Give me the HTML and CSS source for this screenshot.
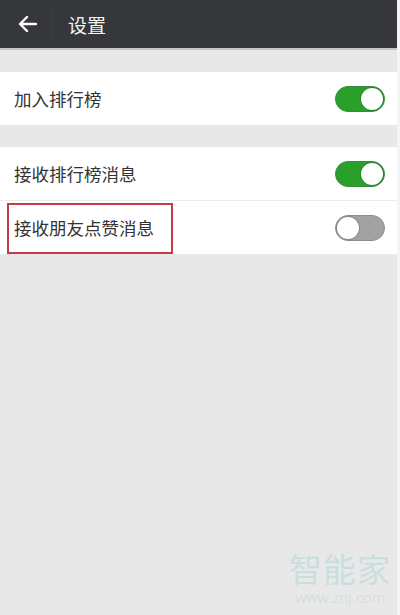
FILE: index.html
```html
<!DOCTYPE html>
<html lang="zh">
<head>
    <meta charset="UTF-8">
    <meta name="viewport" content="width=device-width, initial-scale=1.0">
    <title>设置</title>
    <link rel="stylesheet" href="styles.css">
</head>
<body>
    <div class="screen">
        <div class="top-bar">
            <span class="back-btn">
                <svg width="20" height="18" viewBox="0 0 20 18"><path d="M19 9H3M10 2L3 9l7 7" fill="none" stroke="#fff" stroke-width="2.4" stroke-linecap="round" stroke-linejoin="round"/></svg>
            </span>
            <span class="bar-sep"></span>
            <span class="bar-title">设置</span>
        </div>

        <div class="group">
            <div class="row">
                <span class="row-label">加入排行榜</span>
                <span class="switch on"><span class="knob"></span></span>
            </div>
        </div>

        <div class="group">
            <div class="row">
                <span class="row-label">接收排行榜消息</span>
                <span class="switch on"><span class="knob"></span></span>
            </div>
            <div class="row">
                <span class="row-label">接收朋友点赞消息</span>
                <span class="switch"><span class="knob"></span></span>
                <span class="mark"></span>
            </div>
        </div>

        <div class="watermark">
            <div class="wm-big">智能家</div>
            <div class="wm-small">www.znj.com</div>
        </div>
    </div>
</body>
</html>
```

FILE: styles.css
```css
body { margin: 0; font-family: "Noto Sans CJK SC", "Noto Sans", sans-serif; background-color: #e8e8e8; }
.screen { width: 397px; height: 615px; background-color: #e8e8e8; border-right: 3px solid #f4f4f4; position: relative; overflow: hidden; }
.top-bar { height: 48px; background-color: #36373b; border-bottom: 2px solid #c4c4c6; display: flex; align-items: center; }
.back-btn { width: 52px; display: flex; justify-content: center; padding-left: 2px; box-sizing: border-box; }
.back-btn svg { display: block; }
.bar-sep { width: 1px; height: 30px; background-color: #3e3f43; }
.bar-title { color: #f4f4f4; font-size: 19px; margin-left: 15px; }
.group { margin-top: 22px; background-color: #fff; }
.row { height: 53px; display: flex; align-items: center; justify-content: space-between; padding: 0 12px 0 14px; position: relative; }
.row + .row { border-top: 1px solid #ececec; }
.row-label { font-size: 17.5px; color: #333; }
.switch { width: 50px; height: 26px; border-radius: 13px; background-color: #a2a2a2; border: 1px solid #8e8e8e; box-sizing: border-box; display: flex; align-items: center; justify-content: flex-start; padding: 1px; }
.switch.on { background-color: #29a02b; border-color: #3a8a3a; justify-content: flex-end; }
.knob { width: 22px; height: 22px; border-radius: 50%; background-color: #fff; box-shadow: 0 0 0 1px rgba(0,0,0,0.15); }
.mark { position: absolute; left: 7px; top: 2px; width: 166px; height: 51px; border: 2px solid #c63a44; box-sizing: border-box; }
.watermark { position: absolute; left: 288px; top: 550px; width: 104px; text-align: center; color: #c9dede; }
.wm-big { font-size: 33px; line-height: 36px; letter-spacing: 1px; }
.wm-small { font-size: 14.5px; line-height: 17px; margin-top: 3px; color: #d3dfdf; font-family: "Open Sans", sans-serif; }
```
